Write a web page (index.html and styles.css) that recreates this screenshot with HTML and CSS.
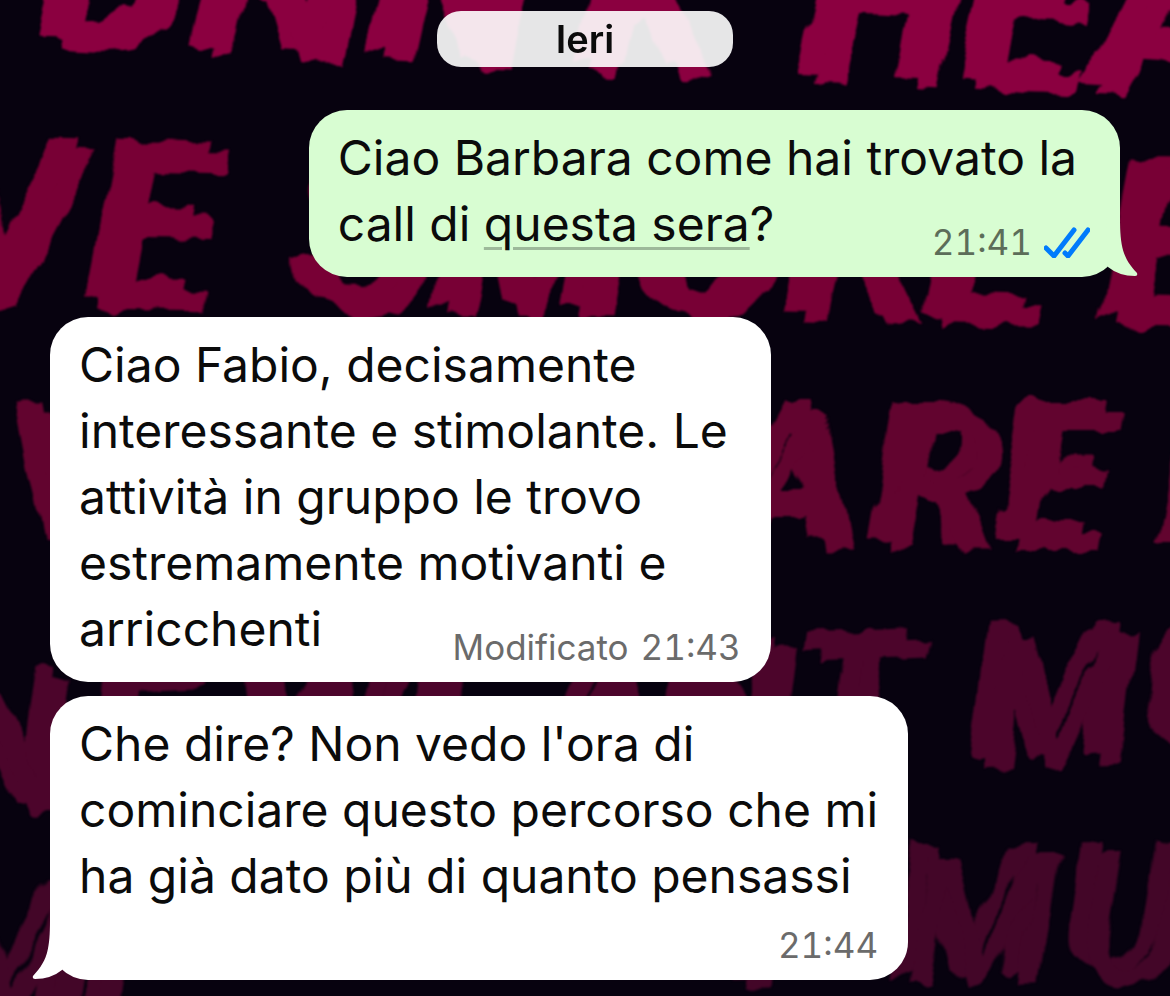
FILE: index.html
```html
<!DOCTYPE html>
<html lang="it">
<head>
    <meta charset="UTF-8">
    <meta name="viewport" content="width=device-width, initial-scale=1.0">
    <title>Chat</title>
    <link rel="stylesheet" href="styles.css">
</head>
<body>
    <!-- wallpaper -->
    <svg class="wallpaper" viewBox="0 0 1170 996" preserveAspectRatio="xMidYMid slice" aria-hidden="true">
        <defs>
            <!-- doubles each letter with a small shift and roughens the edges -->
            <filter id="rough" x="-5%" y="-10%" width="110%" height="120%" color-interpolation-filters="sRGB">
                <feOffset in="SourceGraphic" dx="18" dy="11" result="shifted"/>
                <feMerge result="doubled">
                    <feMergeNode in="SourceGraphic"/>
                    <feMergeNode in="shifted"/>
                </feMerge>
                <feTurbulence type="fractalNoise" baseFrequency="0.04 0.012" numOctaves="2" seed="4" result="noise"/>
                <feDisplacementMap in="doubled" in2="noise" scale="22" xChannelSelector="R" yChannelSelector="G"/>
                <feGaussianBlur stdDeviation="1"/>
            </filter>
        </defs>
        <g class="lettering" filter="url(#rough)">
            <text class="row-1" transform="rotate(2.5)" x="36 188 295 366 570 798 955 1090" y="37">DRINKHEA</text>
            <text class="row-2" transform="rotate(1)" x="-70 84 292 432 628 783 922 1100" y="297">VESMOKEE</text>
            <text class="row-3" x="2" y="540">V</text>
            <text class="row-3" x="720 866 992 1154" y="540">AREF</text>
            <text class="row-4" transform="rotate(-2.5)" x="-104 50 200 370 500 620 760 932 1105" y="801">NEWEANTMO</text>
            <text class="row-5" transform="rotate(-1)" x="-96 55" y="1010">MI</text>
            <text class="row-5" transform="rotate(-1)" x="680 872 1042" y="990">TMU</text>
        </g>
    </svg>

    <main class="chat">
        <div class="day">Ieri</div>

        <article class="bubble sent">
            <p class="text short">Ciao Barbara come hai trovato la<br>call di <span class="event">questa sera</span>?</p>
            <div class="meta inline">
                <time>21:41</time>
                <svg class="ticks" viewBox="0 0 46 31" role="img" aria-label="Letto">
                    <path d="M2 21 L10 29 L30 3 M21 26 L24 29 L44 3"/>
                </svg>
            </div>
            <svg class="tail" viewBox="0 0 32 60" aria-hidden="true">
                <path d="M14 0 C14 30 17 41 31 56 Q32 59 29 59 Q13 59 2 50 L0 0 Z"/>
            </svg>
        </article>

        <article class="bubble received">
            <p class="text short">Ciao Fabio, decisamente<br>interessante e stimolante. Le<br>attività in gruppo le trovo<br>estremamente motivanti e<br>arricchenti</p>
            <div class="meta inline">
                <span>Modificato</span>
                <time>21:43</time>
            </div>
        </article>

        <article class="bubble received last">
            <p class="text">Che dire? Non vedo l'ora di<br>cominciare questo percorso che mi<br>ha già dato più di quanto pensassi</p>
            <div class="meta">
                <time>21:44</time>
            </div>
            <svg class="tail" viewBox="0 0 32 60" aria-hidden="true">
                <path d="M18 0 C18 30 15 41 1 56 Q0 59 3 59 Q19 59 30 50 L32 0 Z"/>
            </svg>
        </article>
    </main>
</body>
</html>
```
FILE: styles.css
```css
body {
    margin: 0;
    min-height: 100vh;
    background-color: #07020f;
    font-family: Inter, "Liberation Sans", sans-serif;
    color: #0b0b0b;
}
.wallpaper {
    position: fixed;
    top: 0;
    left: 0;
    width: 100%;
    height: 100%;
    z-index: -1;
}
.lettering {
    font-family: Roboto, "Liberation Sans", sans-serif;
    font-weight: 500;
    font-style: italic;
    font-size: 224px;
}
.row-1 { fill: #8b0040; }
.row-2 { fill: #780035; }
.row-3 { fill: #62042f; font-size: 194px; }
.row-4 { fill: #4c052b; font-size: 188px; }
.row-5 { fill: #430628; font-size: 182px; }

.chat {
    display: flex;
    flex-direction: column;
    align-items: flex-start;
    padding: 11px 50px 16px;
}
.day {
    align-self: center;
    box-sizing: border-box;
    min-width: 296px;
    padding: 0 30px;
    margin-bottom: 43px;
    border-radius: 24px;
    background-color: rgba(255, 255, 255, 0.9);
    font-size: 38px;
    font-weight: 600;
    line-height: 56px;
    text-align: center;
}
.bubble {
    position: relative;
    display: flex;
    flex-direction: column;
    padding: 15px 30px 12px 29px;
    border-radius: 38px;
    background-color: #fff;
}
.sent {
    align-self: flex-end;
    margin-bottom: 40px;
    background-color: #d8fdd2;
}
.received {
    margin-bottom: 14px;
}
.last {
    margin-bottom: 0;
}
.text {
    margin: 0;
    font-size: 48px;
    line-height: 66px;
}
.short {
    padding-right: 13px;
}
.event {
    text-decoration: underline;
    text-decoration-color: #9db99a;
    text-decoration-thickness: 3px;
    text-underline-offset: 6px;
}
.meta {
    display: flex;
    align-items: center;
    align-self: flex-end;
    gap: 12px;
    margin-top: 13px;
    font-size: 35px;
    font-variant-numeric: tabular-nums;
    line-height: 46px;
    color: #6b6b6b;
}
.inline {
    margin-top: -38px;
}
.sent .meta {
    color: #5c6d59;
}
.ticks {
    width: 46px;
    height: 31px;
    fill: none;
    stroke: #007bfc;
    stroke-width: 5;
    stroke-linecap: round;
    stroke-linejoin: round;
}
.tail {
    position: absolute;
    bottom: 0;
    width: 32px;
    height: 60px;
    fill: #fff;
}
.sent .tail {
    right: -18px;
    fill: #d8fdd2;
}
.last .tail {
    left: -18px;
}
```
